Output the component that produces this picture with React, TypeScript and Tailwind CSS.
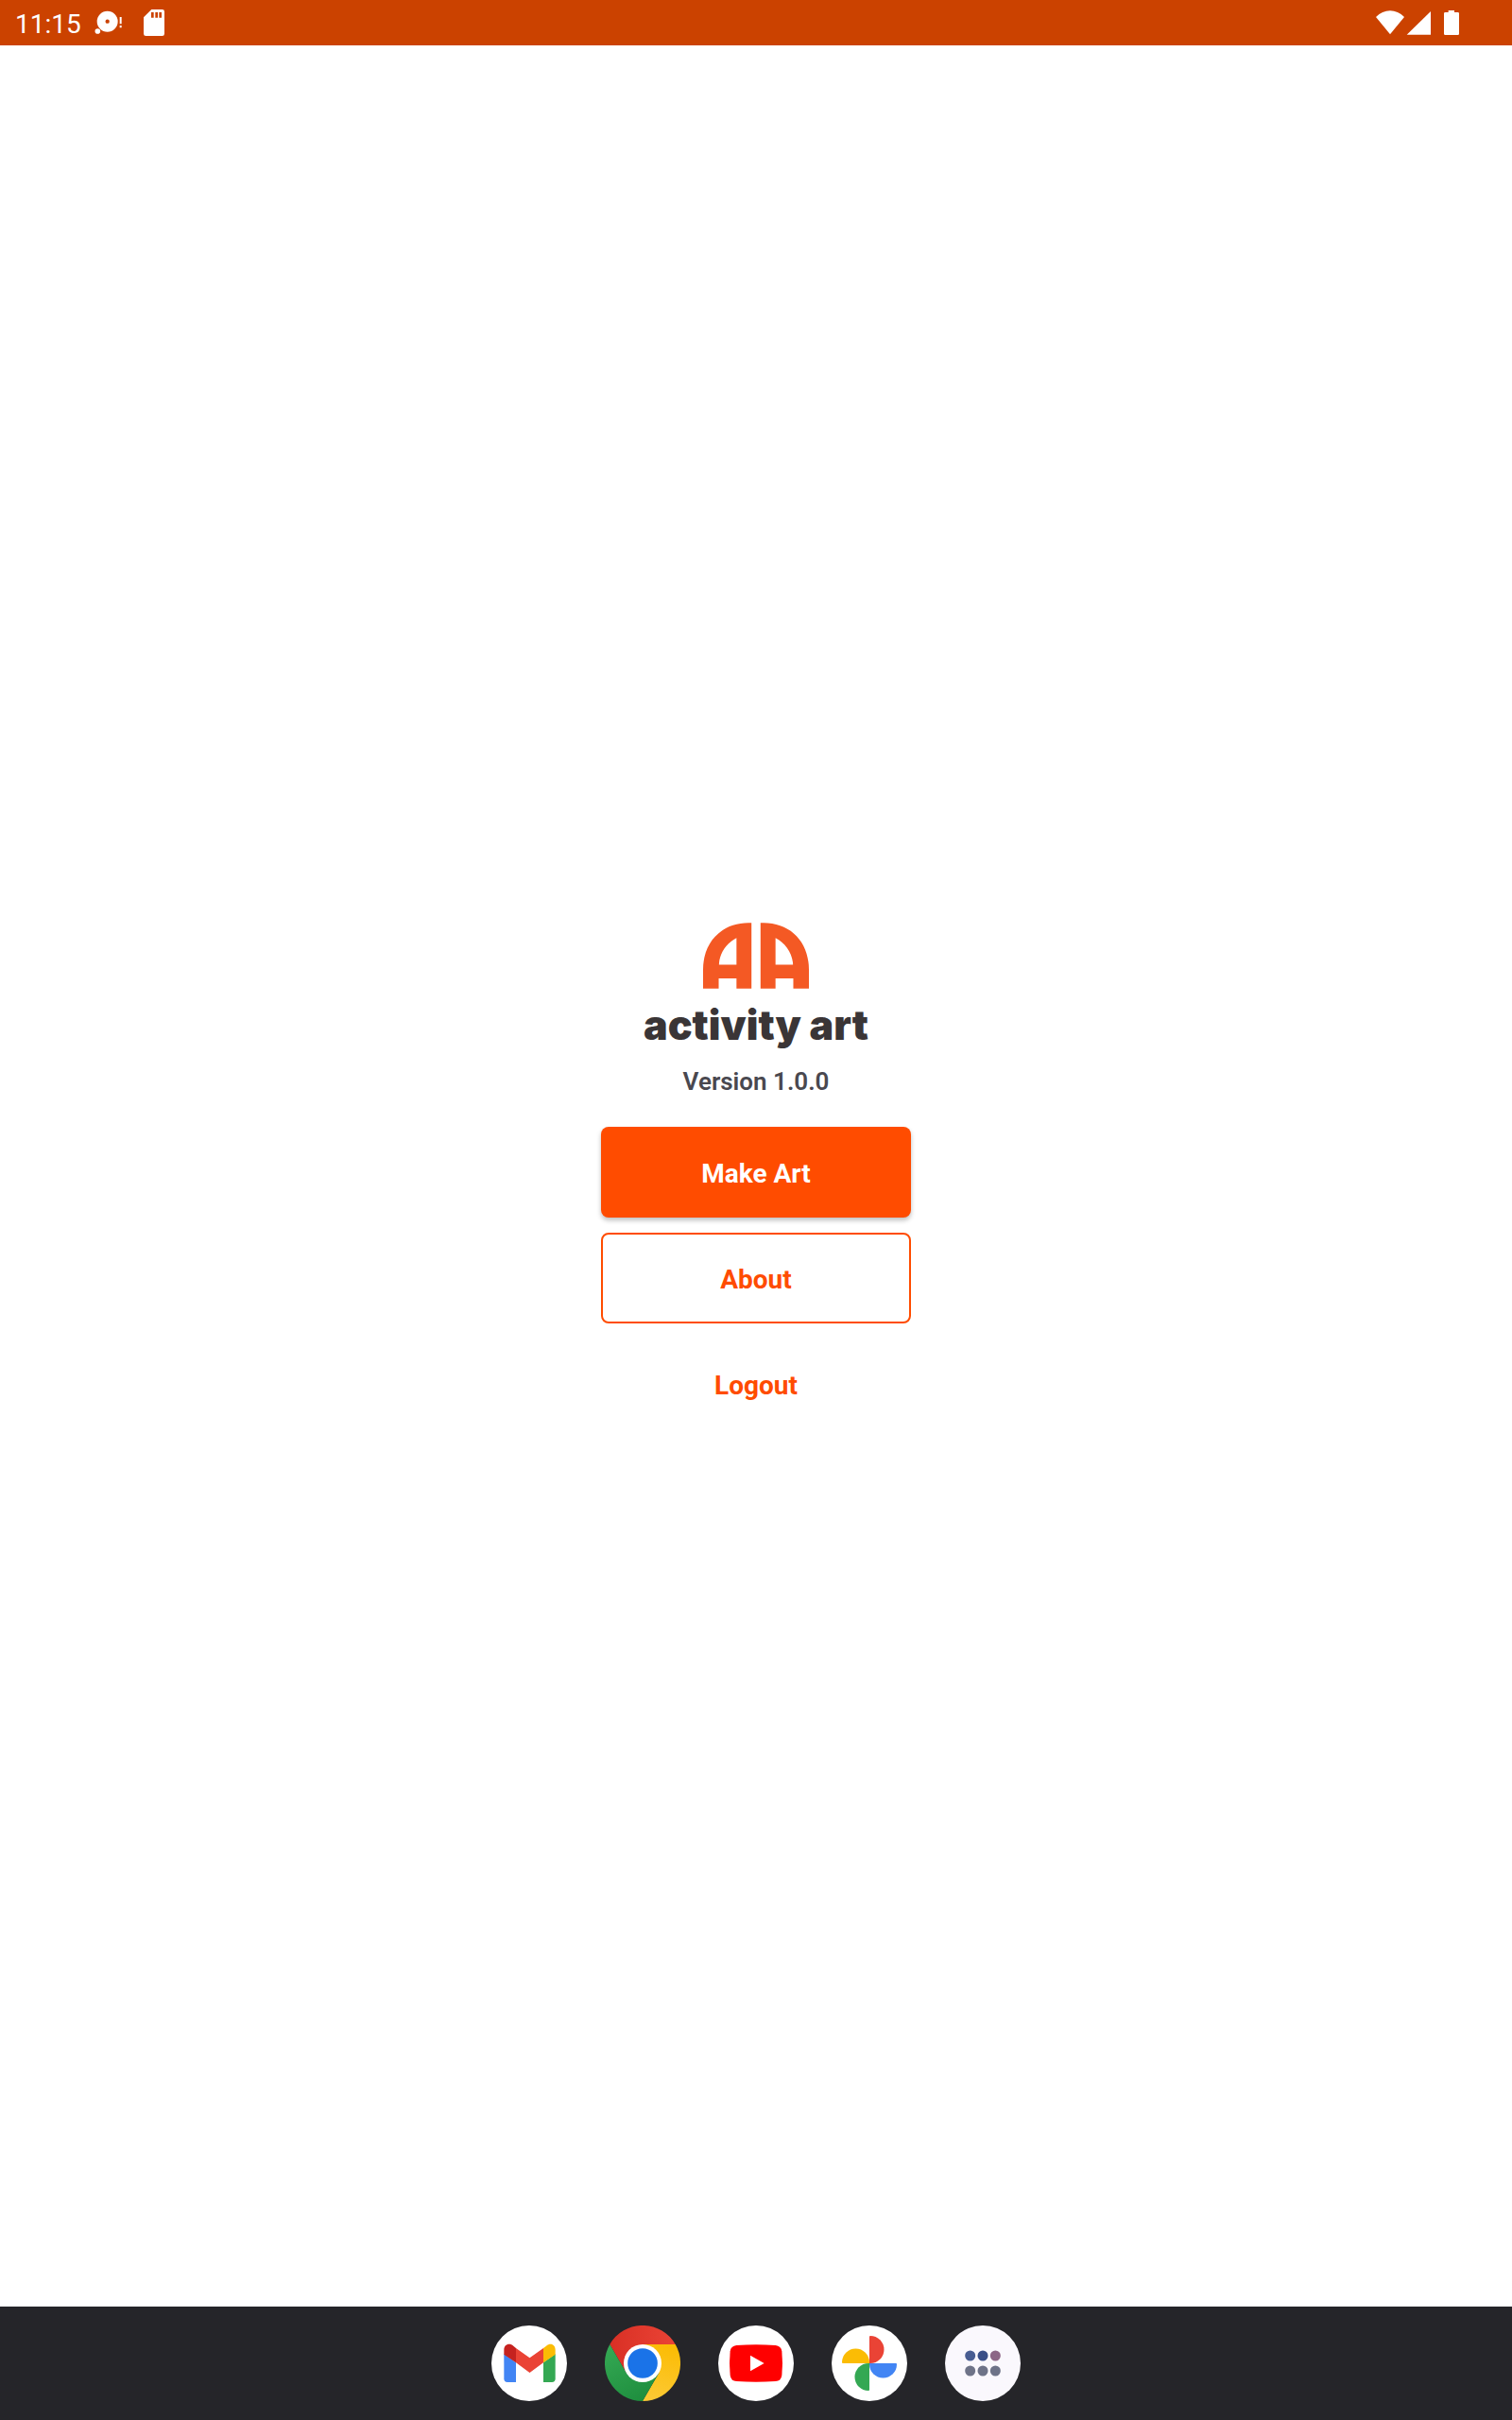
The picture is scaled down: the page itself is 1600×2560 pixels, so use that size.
import React from "react";

function StatusBar() {
  return (
    <header className="flex h-12 items-center justify-between bg-[#cb4200] pr-14 pl-4 text-white">
      <div className="flex items-center">
        <time className="pt-1 text-[28px] leading-8">11:15</time>
        <svg className="ml-3 h-12 w-8" viewBox="0 0 96 144" fill="#fff" aria-hidden="true">
          <path
            fillRule="evenodd"
            d="M47 35a33 33 0 1 1 0 66a33 33 0 0 1 0-66zM47 61.500a6.500 6.500 0 1 0 0 13a6.500 6.500 0 0 0 0-13z"
          />
          <circle cx="16" cy="99" r="8.500" />
          <path d="M86 54h6v22h-6zM86 81h6v7h-6z" />
        </svg>
        <svg className="ml-[22px] h-7 w-[22px]" viewBox="0 0 66 84" fill="#fff" aria-hidden="true">
          <path
            fillRule="evenodd"
            d="M25 0H59Q66 0 66 7V77Q66 84 59 84H7Q0 84 0 77V25ZM24 9V26H32V9ZM37 9V26H45V9ZM49 9V26H57V9Z"
          />
        </svg>
      </div>
      <svg className="h-12 w-[88px]" viewBox="0 0 264 144" fill="#fff" aria-hidden="true">
        <path d="M0 54Q20 34 45 34T90 54L45 109Z" />
        <path d="M98 110L174 36V110Z" />
        <path d="M230 33H249V39H260Q264 39 264 43V107Q264 111 260 111H220Q216 111 216 107V43Q216 39 220 39H230Z" />
      </svg>
    </header>
  );
}

const letterA =
  "M155 0V210H107V178H50V210H0V150C0 58 62 0 145 0ZM107 48C76 63 52 97 51 134H107Z";

function Logo() {
  return (
    <div className="flex flex-col items-center">
      <svg className="h-[70px] w-[112px]" viewBox="0 0 339 210" fill="#f45924" aria-hidden="true">
        <path fillRule="evenodd" d={letterA} />
        <path fillRule="evenodd" d={letterA} transform="translate(339 0) scale(-1 1)" />
      </svg>
      <h1 className="mt-3.5 font-[Inter] text-[43px] leading-[48px] font-black whitespace-nowrap text-[#3a3536]">
        activity art
      </h1>
    </div>
  );
}

const buttonBase = "h-24 w-full rounded-lg pt-1 text-[28px] leading-8 font-bold";

function Gmail() {
  return (
    <svg className="size-20" viewBox="0 0 240 240" aria-hidden="true">
      <circle cx="120" cy="120" r="120" fill="#fff" />
      <path d="M40 90L78 118V180H51Q40 180 40 169Z" fill="#4285f4" />
      <path d="M165 118L203 90V169Q203 180 192 180H165Z" fill="#34a853" />
      <path d="M78 72L121.500 103L165 72V118L121.500 150L78 118Z" fill="#ea4335" />
      <path d="M40 92V77C40 60 57 53 70 65L78 72V118Z" fill="#c5221f" />
      <path d="M165 72L174 65C188 53 203 61 203 77V92L165 118Z" fill="#fbbc04" />
    </svg>
  );
}

function Chrome() {
  return (
    <svg className="size-20" viewBox="0 0 240 240" aria-hidden="true">
      <defs>
        <linearGradient id="chrome-red" x1="0" x2="1">
          <stop offset="0" stopColor="#d93025" />
          <stop offset="1" stopColor="#ea4335" />
        </linearGradient>
        <linearGradient id="chrome-green" x1="0.2" y1="0" x2="0.7" y2="1">
          <stop offset="0" stopColor="#34a853" />
          <stop offset="1" stopColor="#1e8e3e" />
        </linearGradient>
        <linearGradient id="chrome-yellow" x1="0.6" y1="0" x2="0.4" y2="1">
          <stop offset="0" stopColor="#fbbc04" />
          <stop offset="1" stopColor="#fcc934" />
        </linearGradient>
      </defs>
      <path d="M120 120L68 150L16 60A120 120 0 0 1 224 60H120Z" fill="url(#chrome-red)" />
      <path d="M120 120V60H224A120 120 0 0 1 120 240L172 150Z" fill="url(#chrome-yellow)" />
      <path d="M120 120L172 150L120 240A120 120 0 0 1 16 60L68 150Z" fill="url(#chrome-green)" />
      <circle cx="120" cy="120" r="60" fill="#fff" />
      <circle cx="120" cy="120" r="47.500" fill="#1a73e8" />
    </svg>
  );
}

function YouTube() {
  return (
    <svg className="size-20" viewBox="0 0 240 240" aria-hidden="true">
      <circle cx="120" cy="120" r="120" fill="#fff" />
      <path
        d="M58 63Q120 59 182 63Q200 65 202 82Q206 120 202 158Q200 175 182 177Q120 181 58 177Q40 175 38 158Q34 120 38 82Q40 65 58 63Z"
        fill="#f00"
      />
      <path d="M102 95L146 120L102 145Z" fill="#fff" />
    </svg>
  );
}

function Photos() {
  return (
    <svg className="size-20" viewBox="0 0 240 240" aria-hidden="true">
      <circle cx="120" cy="120" r="120" fill="#fff" />
      <path d="M120 120V36Q120 33 123 33A43.500 43.500 0 0 1 123 120Z" fill="#ea4335" />
      <path d="M120 120H204Q207 120 207 123A43.500 43.500 0 0 1 120 123Z" fill="#4285f4" />
      <path d="M120 120V204Q120 207 117 207A43.500 43.500 0 0 1 117 120Z" fill="#34a853" />
      <path d="M120 120H36Q33 120 33 117A43.500 43.500 0 0 1 120 117Z" fill="#fbbc04" />
    </svg>
  );
}

function AllApps() {
  return (
    <svg className="size-20" viewBox="0 0 240 240" aria-hidden="true">
      <circle cx="120" cy="120" r="120" fill="#faf8fd" />
      <circle cx="80" cy="96" r="16.500" fill="#485d92" />
      <circle cx="120" cy="96" r="16.500" fill="#3a4f87" />
      <circle cx="160" cy="96" r="16.500" fill="#8c6686" />
      <circle cx="80" cy="144" r="16.500" fill="#6e7388" />
      <circle cx="120" cy="144" r="16.500" fill="#6e7388" />
      <circle cx="160" cy="144" r="16.500" fill="#6e7388" />
    </svg>
  );
}

const dockApps = [
  { name: "Gmail", Icon: Gmail },
  { name: "Chrome", Icon: Chrome },
  { name: "YouTube", Icon: YouTube },
  { name: "Photos", Icon: Photos },
  { name: "All apps", Icon: AllApps },
];

export default function App() {
  return (
    <div className="flex min-h-screen flex-col bg-white font-[Roboto,sans-serif]">
      <StatusBar />
      <main className="flex flex-1 flex-col items-center justify-center">
        <Logo />
        <p className="mt-5 text-[26px] leading-8 font-semibold text-[#49484f]">Version 1.0.0</p>
        <div className="mt-8 flex w-[328px] flex-col gap-4">
          <button
            type="button"
            className={`${buttonBase} bg-[#ff4c00] text-white shadow-[0_3px_5px_rgba(0,0,0,0.25)]`}
          >
            Make Art
          </button>
          <button type="button" className={`${buttonBase} border-2 border-[#ff4c00] text-[#ff4c00]`}>
            About
          </button>
          <button type="button" className={`${buttonBase} text-[#ff4c00]`}>
            Logout
          </button>
        </div>
      </main>
      <nav className="flex h-[120px] items-center justify-center gap-10 bg-[#252529]" aria-label="Dock">
        {dockApps.map(({ name, Icon }) => (
          <button key={name} type="button" aria-label={name} className="rounded-full">
            <Icon />
          </button>
        ))}
      </nav>
    </div>
  );
}
